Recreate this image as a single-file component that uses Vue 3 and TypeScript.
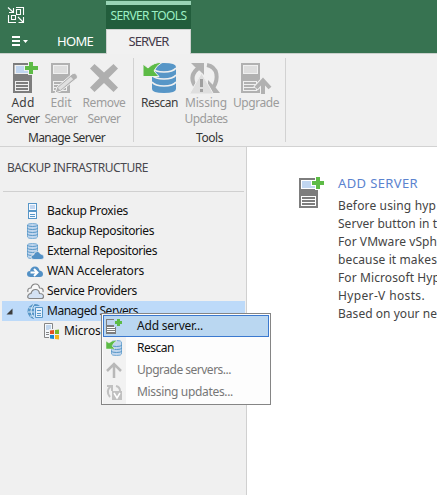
<script setup lang="ts">
import type { Directive } from 'vue'

interface Node { label: string; icon: string; width: number }
interface Tool { lines: [string, number][]; icon: string; cell: number; disabled?: boolean }
interface Group { title: string; titleWidth: number; size: number; tools: Tool[] }

// Tracks a label so that it fills the given width in pixels.
const vFit: Directive<HTMLElement, number> = {
  mounted(el, { value }) {
    const natural = el.getBoundingClientRect().width
    const count = (el.textContent ?? '').trim().length
    el.style.letterSpacing = `${(value - natural) / count}px`
  },
}

const groups: Group[] = [
  {
    title: 'Manage Server', titleWidth: 77, size: 133,
    tools: [
      { lines: [['Add', 23], ['Server', 33]], icon: 'add', cell: 38 },
      { lines: [['Edit', 21], ['Server', 33]], icon: 'edit', cell: 38, disabled: true },
      { lines: [['Remove', 43], ['Server', 33]], icon: 'remove', cell: 48, disabled: true },
    ],
  },
  {
    title: 'Tools', titleWidth: 27, size: 151,
    tools: [
      { lines: [['Rescan', 37]], icon: 'rescan', cell: 43 },
      { lines: [['Missing', 42], ['Updates', 43]], icon: 'missing', cell: 50, disabled: true },
      { lines: [['Upgrade', 46]], icon: 'upgrade', cell: 50, disabled: true },
    ],
  },
]

const nodes: Node[] = [
  { label: 'Backup Proxies', icon: 'proxy', width: 81 },
  { label: 'Backup Repositories', icon: 'repo', width: 107 },
  { label: 'External Repositories', icon: 'external', width: 110 },
  { label: 'WAN Accelerators', icon: 'wan', width: 97 },
  { label: 'Service Providers', icon: 'provider', width: 90 },
  { label: 'Managed Servers', icon: 'managed', width: 91 },
]

const menu = [
  { label: 'Add server...', icon: 'add', width: 66, active: true },
  { label: 'Rescan', icon: 'rescan', width: 37 },
  { label: 'Upgrade servers...', icon: 'up', width: 94, disabled: true },
  { label: 'Missing updates...', icon: 'missing', width: 96, disabled: true },
]

const paragraphs: [string, number][] = [
  ['Before using hyp', 98],
  ['Server button in t', 99],
  ['For VMware vSph', 99],
  ['because it makes', 99],
  ['For Microsoft Hyp', 102],
  ['Hyper-V hosts.', 87],
  ['Based on your ne', 99],
]
</script>

<template>
  <div class="window">
    <header class="titlebar">
      <div class="corner">
        <svg class="logo" width="16" height="16" viewBox="0 0 16 16">
          <path d="M0 .5l5 4.5M5.500 1v4.500H1M8 .5h7.500V8M.5 8v7.500H8M8.500 5.500v2h4v-5h-4v3M3.500 8.500h4v4h-4zM10 10l5 5M15.500 10v5.500H10.500" />
        </svg>
        <svg class="burger" width="17" height="10" viewBox="0 0 17 10">
          <path d="M0 0h8v2H0zM0 4h8v2H0zM0 8h8v2H0zM11 4h5l-2.500 3z" />
        </svg>
      </div>
      <div class="home"><span v-fit="36">HOME</span></div>
      <div class="context">
        <div class="context-name"><span v-fit="76">SERVER TOOLS</span></div>
        <div class="tab"><span v-fit="40">SERVER</span></div>
      </div>
    </header>

    <section class="ribbon">
      <div v-for="g in groups" :key="g.title" class="group" :style="{ width: g.size + 'px' }">
        <div class="tools">
          <div v-for="t in g.tools" :key="t.icon" class="tool" :class="{ disabled: t.disabled }" :style="{ width: t.cell + 'px' }">
            <svg width="34" height="34" viewBox="0 0 34 34">
              <g v-if="t.icon === 'add'">
                <path fill="#7d7d7d" d="M7 3h19v30H7z" /><path fill="#f0f0f0" d="M8.500 5h15v9h-15zM9 21h14v10H9z" /><path fill="#c1d6f0" d="M10 6h13v7H10z" />
                <path fill="#7d7d7d" d="M10 22h12v2H10zM10 25h12v2H10zM10 28h12v2H10z" />
                <path fill="#f0f0f0" d="M22 1h6v4h5v6h-5v4h-6v-4h-4V5h4z" /><path fill="#5dbb46" d="M23 2h4v4h5v4h-5v4h-4v-4h-4V6h4z" />
              </g>
              <g v-else-if="t.icon === 'edit'" transform="translate(1 0)">
                <path fill="#b1b1b1" d="M6 3h19v30H6z" /><path fill="#f0f0f0" d="M8 5h15v9H8zM8 21h14v10H8z" /><path fill="#dedede" d="M9 6h13v7H9z" />
                <path fill="#b1b1b1" d="M9 22h12v2H9zM9 25h12v2H9zM9 28h12v2H9z" />
                <path fill="#b1b1b1" stroke="#f0f0f0" d="M10 33l2-6 15-13q3-2 5 1 1 2-1 4L16 31z" /><path stroke="#e0e0e0" stroke-width="3.500" d="M14 29L27 18" /><path fill="#b1b1b1" d="M27 15l4 4 1-2-3-3z" />
              </g>
              <path v-else-if="t.icon === 'remove'" fill="#afafaf" d="M7.500 4L17 12.500 26.500 4 31 8.500 21.500 18 31 27.500 26.500 32 17 23 7.500 32 3 27.500 12.500 18 3 8.500z" />
              <g v-else-if="t.icon === 'rescan'">
                <path fill="#5796c7" d="M9 7q0-4 12-4t12 4v22q0 4-12 4T9 29z" />
                <path fill="none" stroke="#f0f0f0" stroke-width="1.500" d="M9 8q3 4 12 4t12-4M9 15q3 4 12 4t12-4M9 22q3 4 12 4t12-4" />
                <path fill="#5dbb46" stroke="#f0f0f0" d="M0 4l5 4Q11 2 19 2.500q-6 3.500-8 8.500l5 5.500H0z" />
              </g>
              <g v-else-if="t.icon === 'missing'">
                <path fill="none" stroke="#b1b1b1" stroke-width="4" d="M6 26Q-1 15 11 7M18 5c11 2 12 14 6 23" />
                <path fill="#b1b1b1" d="M2 3h13v12l-4-4-5-4zM19 20l4 4 4 4 4 5H19z" />
                <path fill="#dedede" stroke="#f0f0f0" d="M12.500 13l12 21H.500z" /><path stroke="#9f9f9f" stroke-width="3" d="M12.500 19v8M12.500 29v3" />
              </g>
              <g v-else transform="translate(-5 0)">
                <path fill="#b1b1b1" d="M7 3h19v30H7z" /><path fill="#f0f0f0" d="M9 5h15v9H9zM9 21h14v10H9z" /><path fill="#dedede" d="M10 6h13v7H10z" />
                <path fill="#b1b1b1" d="M10 22h12v2H10zM10 25h12v2H10zM10 28h12v2H10z" />
                <path fill="none" stroke="#f0f0f0" stroke-width="6" d="M29 34V21M21.500 28.500l7.500-8 7.500 8" /><path fill="none" stroke="#b1b1b1" stroke-width="4" d="M29 34V20M22 28l7-7.500 7 7.500" />
              </g>
            </svg>
            <div v-for="[text, w] in t.lines" :key="text" class="tool-line"><span v-fit="w">{{ text }}</span></div>
          </div>
        </div>
        <div class="group-title"><span v-fit="g.titleWidth">{{ g.title }}</span></div>
      </div>
    </section>

    <div class="body">
      <aside class="pane">
        <h2 class="pane-title"><span v-fit="141">BACKUP INFRASTRUCTURE</span></h2>
        <div v-for="n in nodes" :key="n.label" class="node" :class="{ selected: n.icon === 'managed' }">
          <svg v-if="n.icon === 'managed'" class="arrow" width="7" height="7" viewBox="0 0 7 7"><path fill="#3c3c3c" d="M6.500.500v6h-6z" /></svg>
          <svg width="17" height="17" viewBox="0 0 17 17">
            <g v-if="n.icon === 'proxy'">
              <path fill="#5796c7" d="M1 0h9v16H1z" /><path fill="#f7faff" d="M2 1h7v6H2zM2 9h7v6H2z" /><path fill="#c1d6f0" d="M3 2h5v4H3z" /><path fill="#5796c7" d="M1 7h9v2H1zM3 11h5v1H3zM3 13h5v1H3z" />
            </g>
            <g v-else-if="n.icon === 'repo' || n.icon === 'external'">
              <path fill="#c1d6ed" stroke="#79add5" d="M.5 2q0-1.500 5-1.500t5 1.500v12q0 1.500-5 1.500t-5-1.500z" />
              <path fill="none" stroke="#5796c7" d="M0 2q1 1.500 5.500 1.500T11 2M0 5q1 1.500 5.500 1.500T11 5M0 8q1 1.500 5.500 1.500T11 8M0 11q1 1.500 5.500 1.500T11 11" />
              <path v-if="n.icon === 'external'" fill="#5290c5" stroke="#f0f0f0" stroke-width=".8" d="M7 16.500q-3 0-3-2.500 0-2 2.500-2 1-4 4-3.500 2 0 3 2.500 3 0 3.500 3 0 2.500-3 2.500z" />
            </g>
            <g v-else-if="n.icon === 'wan'">
              <path fill="#5290c5" d="M3.500 14Q0 14 0 11q0-3 3-3 1-4.500 5-4.500 3.500 0 4.500 4Q16 8 16 11q0 3-3 3z" />
              <path fill="none" stroke="#fff" stroke-width="2" d="M3.500 9.500H10M7 6l3.500 3.500L7 13" />
            </g>
            <g v-else-if="n.icon === 'provider'" fill="#f8f8f8" stroke="#858585" stroke-width="1.200">
              <path d="M1 9q-1-4 3-4 1-4 4.500-4t4 4Q17 5 16 9" />
              <path fill="#d4e2f4" d="M2.500 15.500Q0 15 1 12.500q1-2 3-2 1-4 4.500-4t4 4q4 0 4 3 0 2-2 2z" />
            </g>
            <g v-else>
              <circle cx="8" cy="8.500" r="7.500" fill="#5796c7" /><path fill="none" stroke="#d9ebfa" d="M2 5h13M1 9h13M3 13h10M7 1q-6 7 0 14" />
              <path fill="#c1d6ed" stroke="#bddaf9" stroke-width="3" d="M8.500 4.500h7v10h-7z" /><path fill="#e4effa" stroke="#5796c7" d="M8.500 4.500h7v10h-7z" /><path stroke="#5796c7" d="M10 7.500h4M10 10.500h4M10 12.500h4" />
            </g>
          </svg>
          <span v-fit="n.width">{{ n.label }}</span>
        </div>
        <div class="node child">
          <svg width="17" height="17" viewBox="0 0 17 17">
            <path fill="#f5f8fc" stroke="#858585" d="M1.500.500h8v14h-8z" /><path fill="#c1d6ed" d="M3 2h5v5H3z" /><path stroke="#858585" d="M3 9.500h4M3 11.500h4" />
            <path fill="#f0f0f0" d="M6 6h11v11H6z" /><path fill="#e54f22" d="M7 7.500l4-.5v4H7z" /><path fill="#7ab929" d="M12 7l4-.5V11h-4z" /><path fill="#1987d1" d="M7 12h4v4l-4-.5z" /><path fill="#f6b51c" d="M12 12h4v4.500l-4-.5z" />
          </svg>
          <span v-fit="52">Microsoft</span>
        </div>
      </aside>

      <main class="content">
        <svg width="26" height="32" viewBox="0 0 26 32">
          <path fill="#7d7d7d" d="M0 1h19v30H0z" /><path fill="#fff" d="M2 3h15v9H2zM2 19h15v10H2z" /><path fill="#c1d6f0" d="M3 4h13v7H3z" />
          <path fill="#7d7d7d" d="M3 20h13v2H3zM3 23h13v2H3zM3 26h13v2H3z" /><path fill="#fff" d="M16 0h6v3h4v6h-4v4h-6V9h-4V3h4z" /><path fill="#5dbb46" d="M17 0h4v4h4v4h-4v4h-4V8h-4V4h4z" />
        </svg>
        <article>
          <h1><span v-fit="80">ADD SERVER</span></h1>
          <p v-for="[text, w] in paragraphs" :key="text"><span v-fit="w">{{ text }}</span></p>
        </article>
      </main>
    </div>

    <div class="menu">
      <div v-for="m in menu" :key="m.label" class="item" :class="{ active: m.active, disabled: m.disabled }">
        <svg width="17" height="17" viewBox="0 0 17 17">
          <g v-if="m.icon === 'add'">
            <path fill="#7d7d7d" d="M0 1h10v15H0z" /><path fill="#c1d6f0" d="M1 2h8v5H1z" /><path fill="#fff" d="M1 9h8v1H1zM1 11h8v1H1zM1 13h8v1H1z" /><path fill="#bad7f1" d="M8 0h9v9H8z" /><path fill="#5dbb46" d="M11 1h3v2h2v3h-2v2h-3V6H9V3h2z" />
          </g>
          <g v-else-if="m.icon === 'rescan'">
            <path fill="#c1d6ed" stroke="#79add5" d="M5.500 2q0-1.500 5-1.500t5 1.500v12q0 1.500-5 1.500t-5-1.500z" />
            <path fill="none" stroke="#5796c7" d="M5 5q1 1.500 5.500 1.500T16 5M5 8q1 1.500 5.500 1.500T16 8M5 11q1 1.500 5.500 1.500T16 11" />
            <path fill="#5dbb46" stroke="#f4f4f4" stroke-width=".5" d="M0 1l3 2q3-3 8-2.500Q7 3 6 6l3 3H0z" />
          </g>
          <path v-else-if="m.icon === 'up'" fill="none" stroke="#b8b8b8" stroke-width="2.500" d="M8 16V3M1 9l7-7 7 7" />
          <g v-else fill="none" stroke="#c1c1c1" stroke-width="2">
            <path d="M4 13Q-1 7 5 2M1 2h5v5M10 2q4 1 4 5" /><path fill="#c1c1c1" stroke="none" d="M6 7h10v9H6z" /><path stroke="#fff" stroke-width="1.500" d="M8 9l3 5 3-5" />
          </g>
        </svg>
        <span v-fit="m.width">{{ m.label }}</span>
      </div>
    </div>
  </div>
</template>

<style>
body { margin: 0; overflow: hidden; }
</style>
<style scoped>
.window { position: relative; width: 437px; height: 495px; overflow: hidden; display: flex; flex-direction: column; background: #f0f0f0; font: 12px/16px "Noto Sans", "Open Sans", sans-serif; color: #111; white-space: nowrap; }
svg { display: block; flex: none; overflow: visible; }
span { display: inline-block; }
h1, h2, p { margin: 0; font-weight: 400; }
.titlebar { height: 53px; flex: none; display: flex; background: #377351; border-bottom: 1px solid #c9d0cc; color: #fff; }
.corner { width: 43px; padding: 7px 0 0 8px; box-sizing: border-box; }
.logo { fill: none; stroke: #fff; stroke-width: 1.1; }
.burger { margin: 13px 0 0 4px; fill: #fff; }
.home { width: 63px; padding: 33px 0 0 14px; box-sizing: border-box; font-size: 13px; }
.context { width: 85px; height: 54px; padding-top: 1px; box-sizing: border-box; }
.context-name { height: 28px; box-sizing: border-box; padding-top: 3px; border-top: 4px solid #98d3b5; background: #225d3c; color: #9df0c4; text-align: center; }
.tab { height: 25px; box-sizing: border-box; padding-top: 3px; border: 1px solid #cfd2d0; border-bottom: 0; background: #f1f1f1; color: #443a4a; text-align: center; font-size: 13px; }
.ribbon { height: 92px; flex: none; display: flex; border-bottom: 1px solid #d2d2d2; }
.group { margin: 4px 0; height: 84px; border-right: 1px solid #d2d2d2; }
.tools { display: flex; height: 72px; padding-left: 4px; }
.tool { color: #3c3c3c; display: flex; flex-direction: column; align-items: center; }
.tool svg { margin: 2px 0 1px; }
.tool.disabled { color: #9c9c9c; }
.tool-line { height: 16px; }
.group-title { text-align: center; color: #333; }
.body { flex: 1; display: flex; }
.pane { width: 246px; flex: none; border-right: 1px solid #d0d0d0; box-sizing: content-box; }
.pane-title { height: 45px; margin: 0 2px 9px 3px; padding: 13px 0 0 4px; box-sizing: border-box; border-bottom: 1px solid #d0d0d0; font-size: 12px; line-height: 16px; color: #48484e; }
.node { position: relative; height: 20px; margin: 0 1px 0 2px; padding-left: 25px; display: flex; align-items: center; gap: 3px; }
.selected { background: #bddaf9; }
.arrow { position: absolute; left: 4px; top: 7px; }
.child { padding-left: 41px; gap: 4px; }
.content { flex: 1; display: flex; background: #fff; overflow: hidden; padding: 30px 0 0 52px; gap: 13px; color: #444; }
h1 { font-size: 13px; line-height: 18px; color: #5b83cf; margin: -3px 0 5px; }
p { height: 18px; line-height: 18px; }
.menu { position: absolute; left: 101px; top: 313px; width: 170px; height: 92px; box-sizing: border-box; padding: 1px; border: 1px solid #858585; background: linear-gradient(90deg, #fdfdfd 1px, #f2f2f2 1px, #f2f2f2 24px, #fdfdfd 24px); }
.item { height: 22px; box-sizing: border-box; padding-left: 2px; display: flex; align-items: center; gap: 14px; border: 1px solid transparent; }
.item.active { background: #bad7f1; border-color: #3b79cf; }
.item.disabled { color: #777; }
</style>
